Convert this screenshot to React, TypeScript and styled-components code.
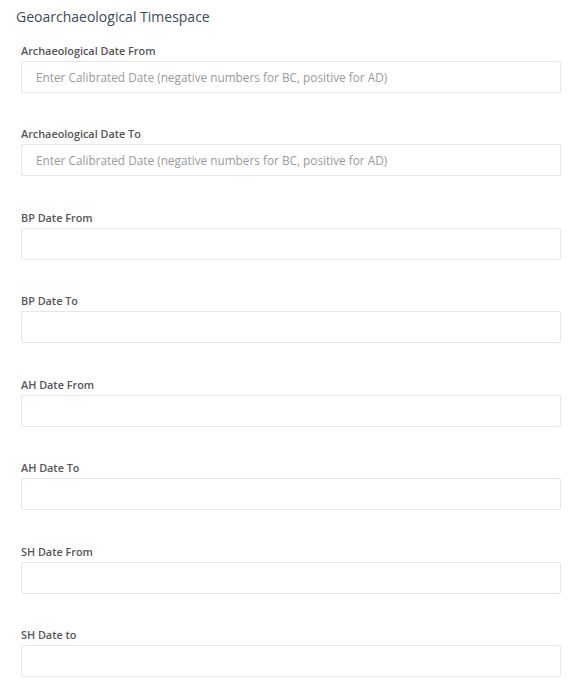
import React from "react";
import styled, { createGlobalStyle } from "styled-components";

const GlobalStyle = createGlobalStyle`
  html, body {
    margin: 0;
    padding: 0;
    background: #ffffff;
  }
  body {
    font-family: "Open Sans", "Liberation Sans", sans-serif;
  }
  * { box-sizing: border-box; }
`;

const Page = styled.div`
  padding: 5px 16px 0 16px;
  width: 577px;
`;

const Title = styled.h3`
  margin: 0 0 14px 0;
  font-size: 14px;
  font-weight: 400;
  line-height: 24px;
  color: #3d4a5c;
`;

const Fields = styled.div`
  display: flex;
  flex-direction: column;
  gap: 33.43px;
  padding: 0 0 0 5px;
`;

const Field = styled.div`
  display: flex;
  flex-direction: column;
`;

const Label = styled.label`
  font-size: 10.85px;
  font-weight: 600;
  line-height: 16px;
  color: #555555;
  margin-bottom: 2px;
`;

const Input = styled.input`
  width: 540px;
  height: 32px;
  border: 1px solid #e6e6e6;
  border-radius: 2px;
  padding: 0 14px;
  font-family: "Open Sans", "Liberation Sans", sans-serif;
  font-size: 11.8px;
  color: #555;
  background: #fff;
  outline: none;
  &::placeholder {
    color: #9a9a9a;
  }
`;

const calibrated = "Enter Calibrated Date (negative numbers for BC, positive for AD)";

const fields: { label: string; placeholder?: string }[] = [
  { label: "Archaeological Date From", placeholder: calibrated },
  { label: "Archaeological Date To", placeholder: calibrated },
  { label: "BP Date From" },
  { label: "BP Date To" },
  { label: "AH Date From" },
  { label: "AH Date To" },
  { label: "SH Date From" },
  { label: "SH Date to" },
];

export default function App() {
  return (
    <>
      <GlobalStyle />
      <Page>
        <Title>Geoarchaeological Timespace</Title>
        <Fields>
          {fields.map((f) => (
            <Field key={f.label}>
              <Label>{f.label}</Label>
              <Input type="text" placeholder={f.placeholder} />
            </Field>
          ))}
        </Fields>
      </Page>
    </>
  );
}
